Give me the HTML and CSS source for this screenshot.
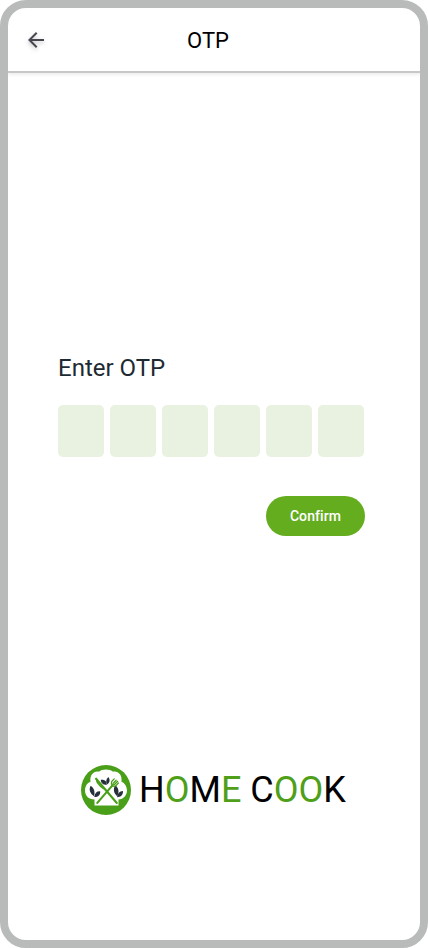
FILE: index.html
```html
<!DOCTYPE html>
<html lang="en">
<head>
<meta charset="utf-8">
<title>OTP</title>
<link rel="stylesheet" href="styles.css">
</head>
<body>
<div class="phone">
  <header class="bar">
    <button class="back" aria-label="Back">
      <svg width="24" height="24" viewBox="0 0 24 24" fill="none" stroke="#49454f" stroke-width="2"><path d="M20 12H5.5M12.7 4.8L5.5 12l7.2 7.2"/></svg>
    </button>
    <h1 class="title">OTP</h1>
  </header>
  <main class="form">
    <h2 class="label">Enter OTP</h2>
    <div class="boxes">
      <input class="box"><input class="box"><input class="box"><input class="box"><input class="box"><input class="box">
    </div>
    <button class="confirm">Confirm</button>
  </main>
  <footer class="brand">
    <svg class="logo" viewBox="5 5 50 50">
      <circle cx="30" cy="30" r="25" fill="#4a9f19"/>
      <path d="M18.5 45.5V39.5C12.5 39.5 9 35.5 9 30.5S12 22.5 14.5 21.7C13.5 15 18 10.5 23 11.7C26 8.7 34 8.7 37 11.7C42 10.5 46.5 15 45.5 21.7C48 22.5 51 26 51 30.5S47.5 39.5 42.5 39.5V45.5Z" fill="#fff"/>
      <g fill="#25303b">
        <path d="M14.7 25.8C18.2 28.2 19.2 32 18 36.3C13.8 33.4 12.6 29.4 14.7 25.8Z"/>
        <path d="M24.2 31.2C20.6 31 18.8 33 18.3 37C22.4 37 24.5 35 24.2 31.2Z"/>
        <path d="M24.8 19.8C28.8 19.5 31 21.4 30.7 25C27 25 24.8 23.1 24.8 19.8Z"/>
        <path d="M32.4 17C29.8 19.4 29.6 22 31.3 24.6C34 22.2 34.3 19.8 32.4 17Z"/>
        <path d="M39.2 25.2C42.8 28 43.4 31.8 41.2 36.3C37.6 33 37 29 39.2 25.2Z"/>
        <path d="M47 31C43.3 31.3 41.5 33.4 41 37.2C45 37 47.2 34.8 47 31Z"/>
      </g>
      <g fill="none" stroke="#4a9f19" stroke-linecap="round">
        <path d="M20.1 18.7L40.8 43" stroke-width="2.1"/>
        <path d="M20.4 18.8C20.5 22.2 23 25.6 27.5 28.5" stroke-width="1.5"/>
        <path d="M21.3 42.9L36.9 24.9" stroke-width="2.1"/>
        <path d="M35.7 21.5C34.4 25 37 27.7 40.2 25.4M35.7 21.5L38.2 18.8M37 23.5L40.1 20.2M38.5 24.5L41.6 21.3M40.2 25.4L42.4 23" stroke-width="1.25"/>
      </g>
    </svg>
    <span class="wordmark">H<b>O</b>M<b>E</b> C<b>OO</b>K</span>
  </footer>
</div>
</body>
</html>
```
FILE: styles.css
```css
* { box-sizing: border-box; }
body { margin: 0; background: #fff; font-family: Roboto, sans-serif; }
button { border: 0; padding: 0; font: inherit; }
.phone {
  width: 428px;
  height: 948px;
  border: 8px solid #b9bbba;
  border-radius: 26px;
  background: #fff;
  overflow: hidden;
  display: flex;
  flex-direction: column;
}
.bar {
  height: 65px;
  flex: none;
  display: grid;
  grid-template-columns: 56px 288px 1fr;
  align-items: center;
  border-bottom: 2px solid #c7c8c7;
  box-shadow: 0 2px 3px rgba(0, 0, 0, .07);
}
.back { width: 24px; height: 24px; margin-left: 16px; background: none; }
.back svg { display: block; filter: drop-shadow(0 2px 2px rgba(0, 0, 0, .25)); }
.title { margin: 2px 0 0; font-size: 22px; line-height: 28px; font-weight: 400; text-align: center; color: #000; }
.form { width: 307px; margin: 279px 0 0 50px; display: flex; flex-direction: column; }
.label { margin: 0; font-size: 24px; line-height: 32px; font-weight: 400; color: #1e2a32; }
.boxes { display: flex; gap: 6px; margin-top: 21px; }
.box { width: 46px; height: 52px; border: 0; padding: 0; border-radius: 5px; background: #e9f2e1; }
.confirm {
  align-self: flex-end;
  width: 99px;
  height: 40px;
  margin-top: 39px;
  border-radius: 20px;
  background: #64ad1f;
  color: #fff;
  font-size: 14px;
  font-weight: 500;
  letter-spacing: .1px;
}
.brand { display: flex; align-items: center; gap: 8px; margin: 229px 0 0 73px; height: 50px; }
.logo { width: 50px; height: 50px; flex: none; }
.wordmark { font-size: 36px; line-height: 44px; white-space: nowrap; color: #000; }
.wordmark b { font-weight: 400; color: #4f9f19; }
```
